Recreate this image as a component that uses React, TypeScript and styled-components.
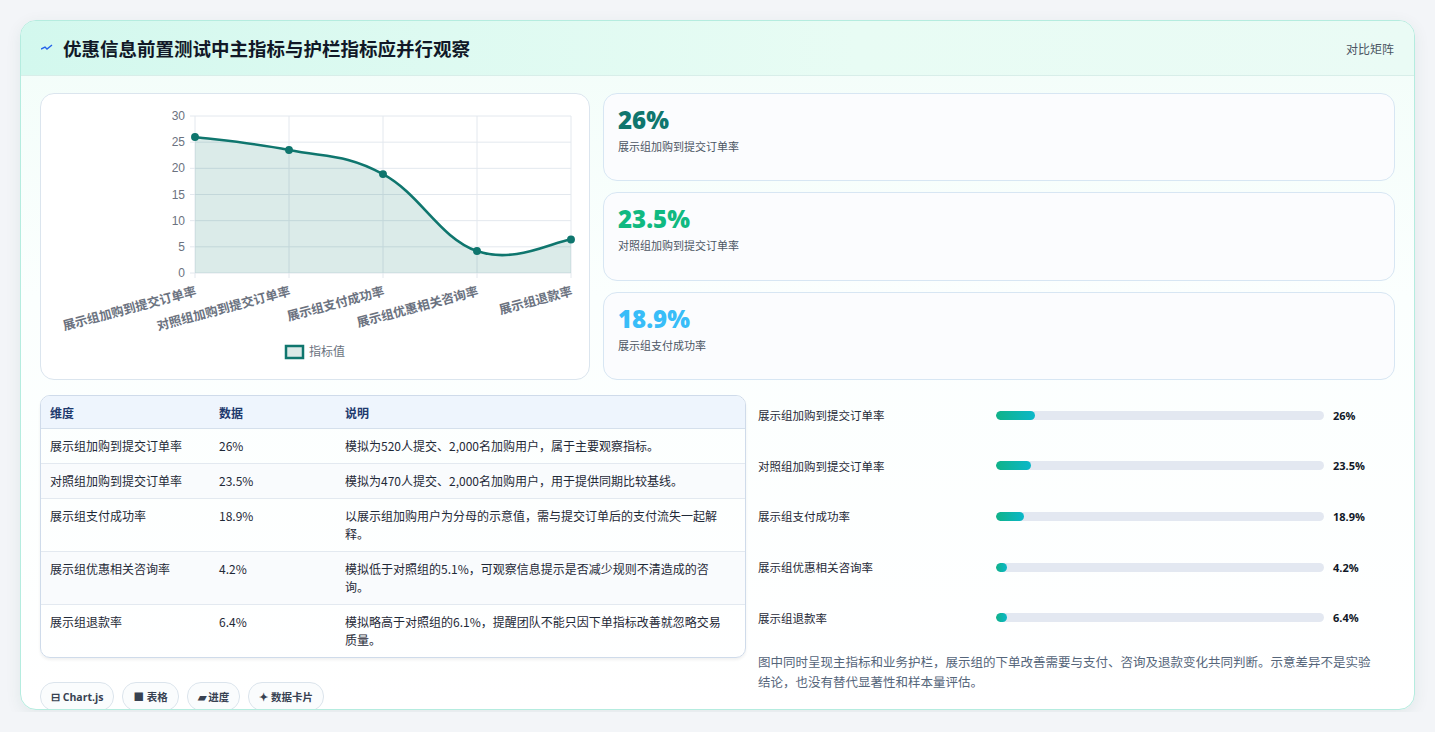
import React from "react";
import styled, { createGlobalStyle } from "styled-components";

const Global = createGlobalStyle`
  body { margin: 0; background: #f3f5f8; font-family: "Noto Sans CJK SC", "Noto Sans", sans-serif; }
`;
const Page = styled.div`padding: 20px 20px 0 20px; height: 712px; box-sizing: border-box;`;
const Card = styled.div`
  border: 1px solid #b5ecdf; border-radius: 16px; overflow: hidden; height: 690px; box-sizing: border-box;
  background: linear-gradient(180deg, #f2fdf9, #fbfffe 40%, #ffffff);
  box-shadow: 0 4px 16px rgba(20,80,70,0.08);
`;
const Header = styled.div`
  height: 54px; display: flex; align-items: center; justify-content: space-between; padding: 0 20px;
  background: linear-gradient(90deg, #d3f8ee, #e8fcf4 60%, #eafbf5); border-bottom: 1px solid #d8eee9;
`;
const Title = styled.h1`margin: 0; font-size: 18.5px; font-weight: 700; color: #111827; display: flex; align-items: center; gap: 10px;`;
const Tag = styled.span`font-size: 12px; color: #4b5563;`;
const Body = styled.div`padding: 17px 19px 0 19px; display: flex; flex-direction: column; gap: 15px;`;
const TopRow = styled.div`display: grid; grid-template-columns: 550px 1fr; gap: 13px; height: 287px;`;
const ChartBox = styled.div`border: 1px solid #dbe5ee; border-radius: 14px; background: #fff; position: relative;`;
const Kpis = styled.div`display: flex; flex-direction: column; gap: 11px;`;
const Kpi = styled.div`flex: 1; border: 1px solid #d7e6f3; border-radius: 14px; background: #fbfcfe; padding: 11px 14px; box-sizing: border-box;`;
const KpiVal = styled.div<{ c: string }>`font-family: "Open Sans", sans-serif; font-size: 24px; font-weight: 800; color: ${p => p.c}; line-height: 30px;`;
const KpiLabel = styled.div`font-size: 11px; color: #4b5563; margin-top: 3px;`;
const BottomRow = styled.div`display: grid; grid-template-columns: 706px 1fr; gap: 12px;`;
const Left = styled.div`display: flex; flex-direction: column; gap: 24px;`;
const Table = styled.table`
  width: 100%; border-collapse: separate; border-spacing: 0; border: 1px solid #cfdbea; border-radius: 10px; overflow: hidden;
  font-size: 12px; color: #1f2937; box-shadow: 0 2px 3px rgba(0,0,0,0.06);
  th { background: #eef5fd; color: #1e3a6e; font-weight: 600; text-align: left; height: 32px; padding: 0 9px; border-bottom: 1px solid #d5e0ec; }
  td { padding: 8px 9px; line-height: 18px; vertical-align: top; border-bottom: 1px solid #e3e9f0; }
  td:last-child { padding-right: 14px; }
  tr:last-child td { border-bottom: none; }
  tr:nth-child(even) td { background: #f9fbfd; }
`;
const Chips = styled.div`display: flex; gap: 8px;`;
const Chip = styled.span`border: 1px solid #dbe4ec; border-radius: 14px; padding: 0 10px; height: 27px; display: flex; align-items: center; font-size: 10.5px; font-weight: 700; color: #374151; background: #fafcfd; font-family: "Open Sans", "Noto Sans CJK SC", sans-serif;`;
const Right = styled.div`display: flex; flex-direction: column; margin-top: -5px;`;
const BarRow = styled.div`display: grid; grid-template-columns: 238px 328px 1fr; align-items: center; height: 50.6px;`;
const BarLabel = styled.span`font-size: 11.5px; color: #1f2937;`;
const Track = styled.div`height: 9px; background: #e3e8f1; border-radius: 5px; overflow: hidden;`;
const Fill = styled.div`height: 100%; border-radius: 5px; background: linear-gradient(90deg, #10b388, #0bb7c9);`;
const BarVal = styled.span`font-size: 11px; font-weight: 700; color: #111827; padding-left: 9px; font-family: "Open Sans", sans-serif;`;
const Note = styled.p`margin: 9px 0 0; padding-right: 16px; font-size: 12.5px; line-height: 20px; color: #55657a;`;

const data = [
  { k: "展示组加购到提交订单率", v: 26, d: "模拟为520人提交、2,000名加购用户，属于主要观察指标。" },
  { k: "对照组加购到提交订单率", v: 23.5, d: "模拟为470人提交、2,000名加购用户，用于提供同期比较基线。" },
  { k: "展示组支付成功率", v: 18.9, d: "以展示组加购用户为分母的示意值，需与提交订单后的支付流失一起解释。" },
  { k: "展示组优惠相关咨询率", v: 4.2, d: "模拟低于对照组的5.1%，可观察信息提示是否减少规则不清造成的咨询。" },
  { k: "展示组退款率", v: 6.4, d: "模拟略高于对照组的6.1%，提醒团队不能只因下单指标改善就忽略交易质量。" },
];

function Chart() {
  const x0 = 154, x1 = 530, yT = 22, yB = 179;
  const xs = data.map((_, i) => x0 + (i * (x1 - x0)) / 4);
  const ys = data.map(d => yB - (d.v * (yB - yT)) / 30);
  const pts = xs.map((x, i) => [x, ys[i]]);
  let path = `M${pts[0][0]},${pts[0][1]}`;
  for (let i = 0; i < pts.length - 1; i++) {
    const p0 = pts[i - 1] || pts[i], p1 = pts[i], p2 = pts[i + 1], p3 = pts[i + 2] || p2;
    const t = 0.2;
    path += ` C${p1[0] + (p2[0] - p0[0]) * t},${p1[1] + (p2[1] - p0[1]) * t} ${p2[0] - (p3[0] - p1[0]) * t},${p2[1] - (p3[1] - p1[1]) * t} ${p2[0]},${p2[1]}`;
  }
  const area = `${path} L${x1},${yB} L${x0},${yB} Z`;
  return (
    <svg width="548" height="285" style={{ display: "block" }}>
      {[0, 5, 10, 15, 20, 25, 30].map(v => {
        const y = yB - (v * (yB - yT)) / 30;
        return (
          <g key={v}>
            <line x1={x0 - 5} x2={x1} y1={y} y2={y} stroke="#e3e8ee" />
            <text x={x0 - 10} y={y + 4} textAnchor="end" fontSize="12" fill="#6b7280" fontFamily="Liberation Sans, sans-serif">{v}</text>
          </g>
        );
      })}
      {xs.map((x, i) => <line key={i} x1={x} x2={x} y1={yT} y2={yB + 5} stroke="#e3e8ee" />)}
      <path d={area} fill="rgba(15,118,110,0.15)" />
      <path d={path} fill="none" stroke="#0f766e" strokeWidth="2.6" />
      {pts.map((p, i) => <circle key={i} cx={p[0]} cy={p[1]} r="3.2" fill="#0f766e" stroke="#0f766e" strokeWidth="1.5" />)}
      {data.map((d, i) => (
        <text key={i} x={xs[i] + 2} y={yB + 22} textAnchor="end" fontSize="12.5" fontWeight="600" fill="#6b7280" transform={`rotate(-15 ${xs[i] + 2} ${yB + 22})`} fontFamily="Noto Sans CJK SC, sans-serif">{d.k}</text>
      ))}
      <rect x="245" y="252" width="17" height="12" fill="#dbe9e7" stroke="#0f766e" strokeWidth="2.5" />
      <text x="268" y="262" fontSize="12" fill="#6b7280" fontFamily="Noto Sans CJK SC, sans-serif">指标值</text>
    </svg>
  );
}

export default function App() {
  const kpiColors = ["#0f766e", "#10b981", "#38bdf8"];
  return (
    <Page>
      <Global />
      <Card>
        <Header>
          <Title>
            <svg width="12" height="10" viewBox="0 0 12 10"><path d="M0 6 L4 4 L6 6 L11 2" stroke="#2563eb" strokeWidth="1.4" fill="none" /></svg>
            优惠信息前置测试中主指标与护栏指标应并行观察
          </Title>
          <Tag>对比矩阵</Tag>
        </Header>
        <Body>
          <TopRow>
            <ChartBox><Chart /></ChartBox>
            <Kpis>
              {data.slice(0, 3).map((d, i) => (
                <Kpi key={i}><KpiVal c={kpiColors[i]}>{d.v}%</KpiVal><KpiLabel>{d.k}</KpiLabel></Kpi>
              ))}
            </Kpis>
          </TopRow>
          <BottomRow>
            <Left>
              <Table>
                <thead><tr><th style={{ width: 151 }}>维度</th><th style={{ width: 108 }}>数据</th><th>说明</th></tr></thead>
                <tbody>
                  {data.map((d, i) => (<tr key={i}><td>{d.k}</td><td>{d.v}%</td><td>{d.d}</td></tr>))}
                </tbody>
              </Table>
              <Chips>
                <Chip>⊟ Chart.js</Chip><Chip>■ 表格</Chip><Chip>▰ 进度</Chip><Chip>✦ 数据卡片</Chip>
              </Chips>
            </Left>
            <Right>
              {data.map((d, i) => (
                <BarRow key={i}>
                  <BarLabel>{d.k}</BarLabel>
                  <Track><Fill style={{ width: `${Math.max(d.v * 1.5, 11)}px` }} /></Track>
                  <BarVal>{d.v}%</BarVal>
                </BarRow>
              ))}
              <Note>图中同时呈现主指标和业务护栏，展示组的下单改善需要与支付、咨询及退款变化共同判断。示意差异不是实验结论，也没有替代显著性和样本量评估。</Note>
            </Right>
          </BottomRow>
        </Body>
      </Card>
    </Page>
  );
}
